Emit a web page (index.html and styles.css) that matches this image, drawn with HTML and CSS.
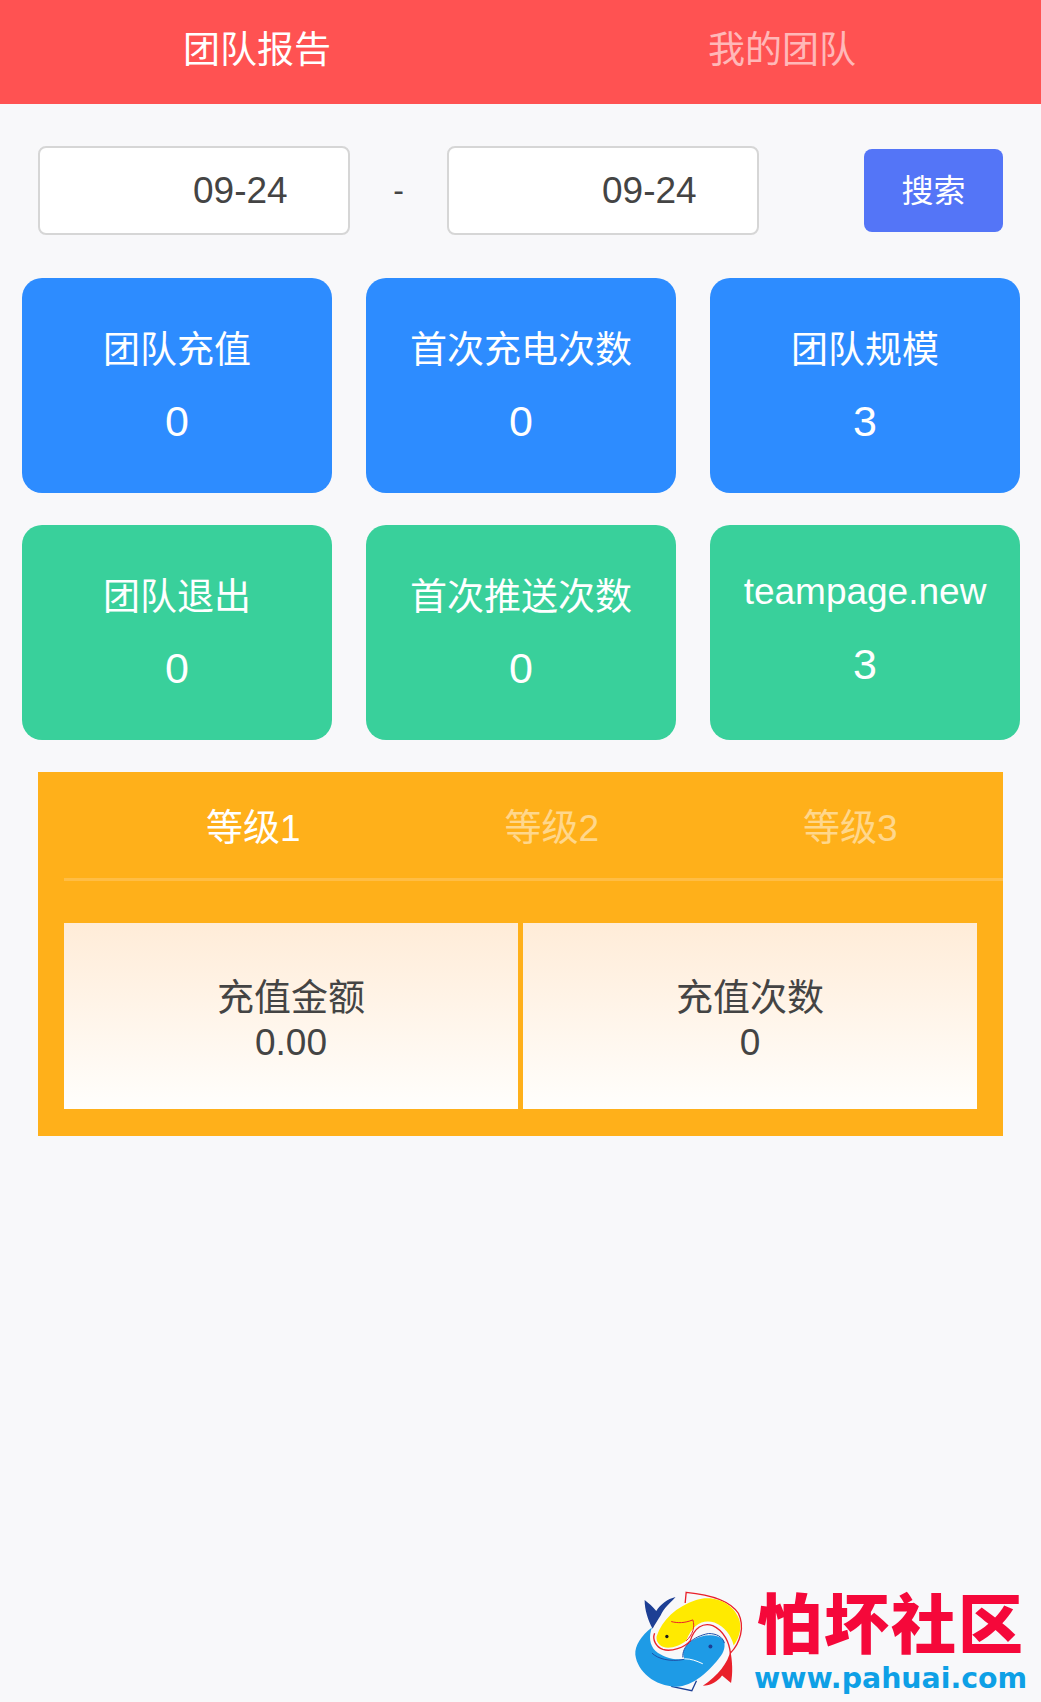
FILE: index.html
```html
<!DOCTYPE html>
<html>
<head>
  <title>团队报告</title>
  <meta charset="utf-8">
  <link rel="stylesheet" href="styles.css">
</head>
<body>

  <div class="topbar">
    <div class="topbar-tab active">团队报告</div>
    <div class="topbar-tab">我的团队</div>
  </div>

  <div class="search-row">
    <input class="date-input" type="text" value="09-24">
    <span class="date-dash">-</span>
    <input class="date-input" type="text" value="09-24">
    <button class="search-btn" type="button">搜索</button>
  </div>

  <div class="stats">
    <div class="stat blue"><div class="stat-title">团队充值</div><div class="stat-num">0</div></div>
    <div class="stat blue"><div class="stat-title">首次充电次数</div><div class="stat-num">0</div></div>
    <div class="stat blue"><div class="stat-title">团队规模</div><div class="stat-num">3</div></div>
    <div class="stat green"><div class="stat-title">团队退出</div><div class="stat-num">0</div></div>
    <div class="stat green"><div class="stat-title">首次推送次数</div><div class="stat-num">0</div></div>
    <div class="stat green latin"><div class="stat-title">teampage.new</div><div class="stat-num">3</div></div>
  </div>

  <div class="levels">
    <div class="level-tabs">
      <div class="level-tab active">等级1</div>
      <div class="level-tab">等级2</div>
      <div class="level-tab">等级3</div>
    </div>
    <div class="level-cells">
      <div class="level-cell"><div>充值金额</div><div>0.00</div></div>
      <div class="level-cell"><div>充值次数</div><div>0</div></div>
    </div>
  </div>

  <!-- watermark, sits over the page corner -->
  <div class="mark">
    <svg class="mark-fish" viewBox="35 50 340 320" width="113" height="107">
      <path fill="#1d3f94" d="M70 85C82 95 95 105 105 118C118 98 138 82 163 76C150 92 128 108 118 132C108 148 100 160 94 172C80 145 70 115 70 85Z"/>
      <path fill="none" stroke="#1d3f94" stroke-width="4" d="M150 345L212 358L226 328"/>
      <path fill="#1e9be6" d="M92 168C60 192 40 222 42 250C48 300 100 345 165 346C215 345 265 300 300 252C312 235 314 215 305 203C285 185 240 188 212 208C190 225 180 245 190 262C160 268 125 258 102 238C85 220 82 195 92 168Z"/>
      <path fill="none" stroke="#1d4fa8" stroke-width="3" d="M185 258C182 225 215 195 262 186C285 186 305 195 310 215M92 245C110 262 145 272 188 264"/>
      <path fill="none" stroke="#fff" stroke-width="3" d="M190 262C210 262 225 268 245 277"/>
      <path fill="#e9212b" d="M328 238C322 272 290 315 245 343C270 342 290 330 303 312L330 335C336 305 334 270 328 238Z"/>
      <path fill="none" stroke="#e9212b" stroke-width="4" d="M192 94L195 62C260 68 325 85 352 125C372 165 358 215 328 245C325 215 310 178 275 162C245 152 220 168 207 208C190 228 150 242 125 234C105 226 92 205 100 185"/>
      <path fill="#ffea00" d="M106 195C122 145 165 105 225 85C285 68 340 98 356 148C362 178 352 202 338 222C330 190 310 165 280 153C245 143 215 158 195 208C175 224 145 234 125 226C112 220 104 208 106 195Z"/>
      <path fill="none" stroke="#e9212b" stroke-width="3" d="M150 150C170 155 190 155 215 145C222 165 215 190 195 208"/>
      <circle cx="137" cy="195" r="5" fill="#1a1a1a"/>
      <circle cx="268" cy="225" r="6" fill="#1d3f94"/>
    </svg>
    <div class="mark-text">
      <div class="mark-name">怕坏社区</div>
      <div class="mark-url">www.pahuai.com</div>
    </div>
  </div>

</body>
</html>
```

FILE: styles.css
```css
body { margin: 0; min-height: 1702px; position: relative; overflow: hidden; background: #f8f8fa; color: #444; font-family: "Liberation Sans", "Noto Sans CJK SC", sans-serif; font-size: 37px; }

.topbar { height: 104px; background: #ff5252; display: grid; grid-template-columns: 514px 518px; column-gap: 9px; align-items: center; color: rgba(255,255,255,.6); }
.topbar-tab { text-align: center; margin-top: -10px; }
.topbar-tab.active { color: #fff; }

.search-row { display: flex; align-items: center; height: 89px; margin: 42px 38px 0; }
.date-input { width: 312px; height: 89px; box-sizing: border-box; padding: 0 0 0 153px; background: #fff; border: 2px solid #d6d6d6; border-radius: 8px; color: #444; font: inherit; }
.date-dash { width: 97px; text-align: center; font-size: 32px; }
.search-btn { margin-left: auto; width: 139px; height: 83px; padding: 0 0 6px; background: #5475f7; color: #fff; border: none; border-radius: 8px; font: inherit; font-size: 32px; }

.stats { display: grid; grid-template-columns: repeat(3, 310px); column-gap: 34px; row-gap: 32px; margin: 43px 22px 0; }
.stat { height: 215px; box-sizing: border-box; padding-top: 42px; border-radius: 20px; color: #fff; text-align: center; }
.stat.blue { background: #2d8cff; }
.stat.green { background: #39d09b; }
.stat.latin { padding-top: 46px; }
.stat-title { min-height: 46px; }
.stat-num { margin-top: 23px; font-size: 43px; }

.levels { margin: 32px 38px 0; height: 364px; background: #ffb01a; padding-left: 26px; }
.level-tabs { display: grid; grid-template-columns: repeat(3, 298.5px); height: 106px; padding-left: 40px; align-items: center; border-bottom: 3px solid #ffbd45; color: rgba(255,255,255,.5); }
.level-tab { text-align: center; }
.level-tab.active { color: #fff; }
.level-cells { display: flex; gap: 5px; margin-top: 42px; width: 913px; }
.level-cell { flex: 1; height: 186px; box-sizing: border-box; padding-top: 9px; display: flex; flex-direction: column; justify-content: center; text-align: center; line-height: 44px; background: linear-gradient(#ffecd8, #fffefc); }

.mark { position: absolute; left: 633px; top: 1588px; display: flex; }
.mark-fish { display: block; }
.mark-text { margin-left: 11px; }
.mark-name { color: #f5083a; font-size: 65px; line-height: 76px; font-weight: 900; letter-spacing: 2px; white-space: nowrap; }
.mark-url { color: #0ea0e6; font-family: "DejaVu Sans", sans-serif; font-size: 28.4px; font-weight: bold; line-height: 30px; margin-left: -3px; white-space: nowrap; }
```
